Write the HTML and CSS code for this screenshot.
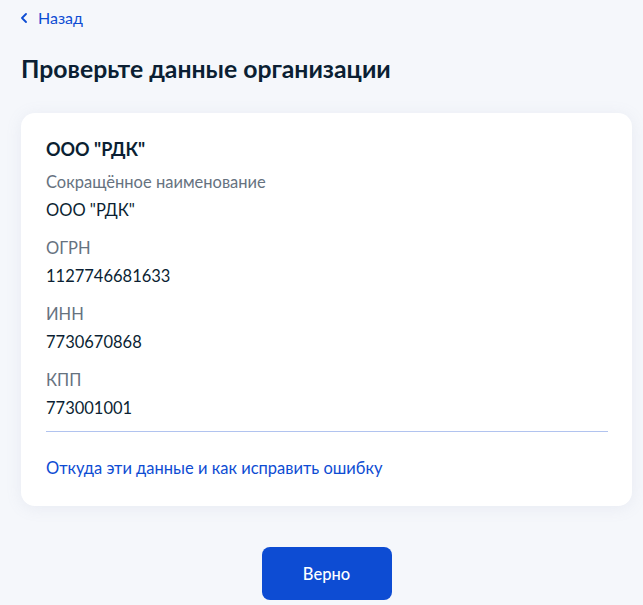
FILE: index.html
```html
<!DOCTYPE html>
<html lang="ru">
<head>
<meta charset="utf-8">
<title>Проверьте данные организации</title>
<link rel="stylesheet" href="styles.css">
</head>
<body>
<div class="page">
  <a class="back" href="#">
    <svg class="back-icon" width="6" height="10" viewBox="0 0 6 10"><path d="M5 1 1 5l4 4" fill="none" stroke="currentColor" stroke-width="1.8" stroke-linecap="round" stroke-linejoin="round"/></svg>
    <span>Назад</span>
  </a>
  <h1 class="title">Проверьте данные организации</h1>
  <section class="card">
    <h2 class="org">ООО "РДК"</h2>
    <div class="fields">
      <div class="field">
        <div class="label">Сокращённое наименование</div>
        <div class="value">ООО "РДК"</div>
      </div>
      <div class="field">
        <div class="label">ОГРН</div>
        <div class="value">1127746681633</div>
      </div>
      <div class="field">
        <div class="label">ИНН</div>
        <div class="value">7730670868</div>
      </div>
      <div class="field">
        <div class="label">КПП</div>
        <div class="value">773001001</div>
      </div>
    </div>
    <a class="info-link" href="#">Откуда эти данные и как исправить ошибку</a>
  </section>
  <div class="actions">
    <button class="btn" type="button">Верно</button>
  </div>
</div>
</body>
</html>
```
FILE: styles.css
```css
* { box-sizing: border-box; }
html, body { margin: 0; padding: 0; }
body {
  background: #f5f7fb;
  font-family: Lato, "Noto Sans", sans-serif;
  color: #0b1f33;
  font-size: 16.5px;
  line-height: 24px;
}
.page {
  padding: 5px 11px 0 21px;
}
.back {
  display: inline-flex;
  align-items: center;
  gap: 11px;
  color: #0d4cd3;
  text-decoration: none;
  font-size: 16px;
  line-height: 24px;
}
.back-icon { display: block; }
.title {
  margin: 23px 0 28px;
  font-size: 24.75px;
  line-height: 32px;
  font-weight: 700;
}
.card {
  background: #fff;
  border-radius: 14px;
  padding: 24px 24px 26px 25px;
  box-shadow: 0 2px 16px rgba(136, 152, 184, 0.12);
}
.org {
  margin: 0 0 9px;
  font-size: 18px;
  line-height: 24px;
  font-weight: 700;
}
.fields {
  display: flex;
  flex-direction: column;
  gap: 14px;
  padding-bottom: 11px;
  border-bottom: 1px solid #b1c3ef;
}
.field {
  display: flex;
  flex-direction: column;
  gap: 4px;
}
.label { color: #66727f; }
.value { color: #0b1f33; }
.info-link {
  display: block;
  margin-top: 24px;
  color: #0d4cd3;
  text-decoration: none;
}
.actions {
  display: flex;
  justify-content: center;
  padding-top: 41px;
}
.btn {
  width: 130px;
  height: 53px;
  border: 0;
  border-radius: 8px;
  background: #0d4cd3;
  color: #fff;
  font-family: Lato, "Noto Sans", sans-serif;
  font-size: 16.5px;
  font-weight: 500;
}
```
